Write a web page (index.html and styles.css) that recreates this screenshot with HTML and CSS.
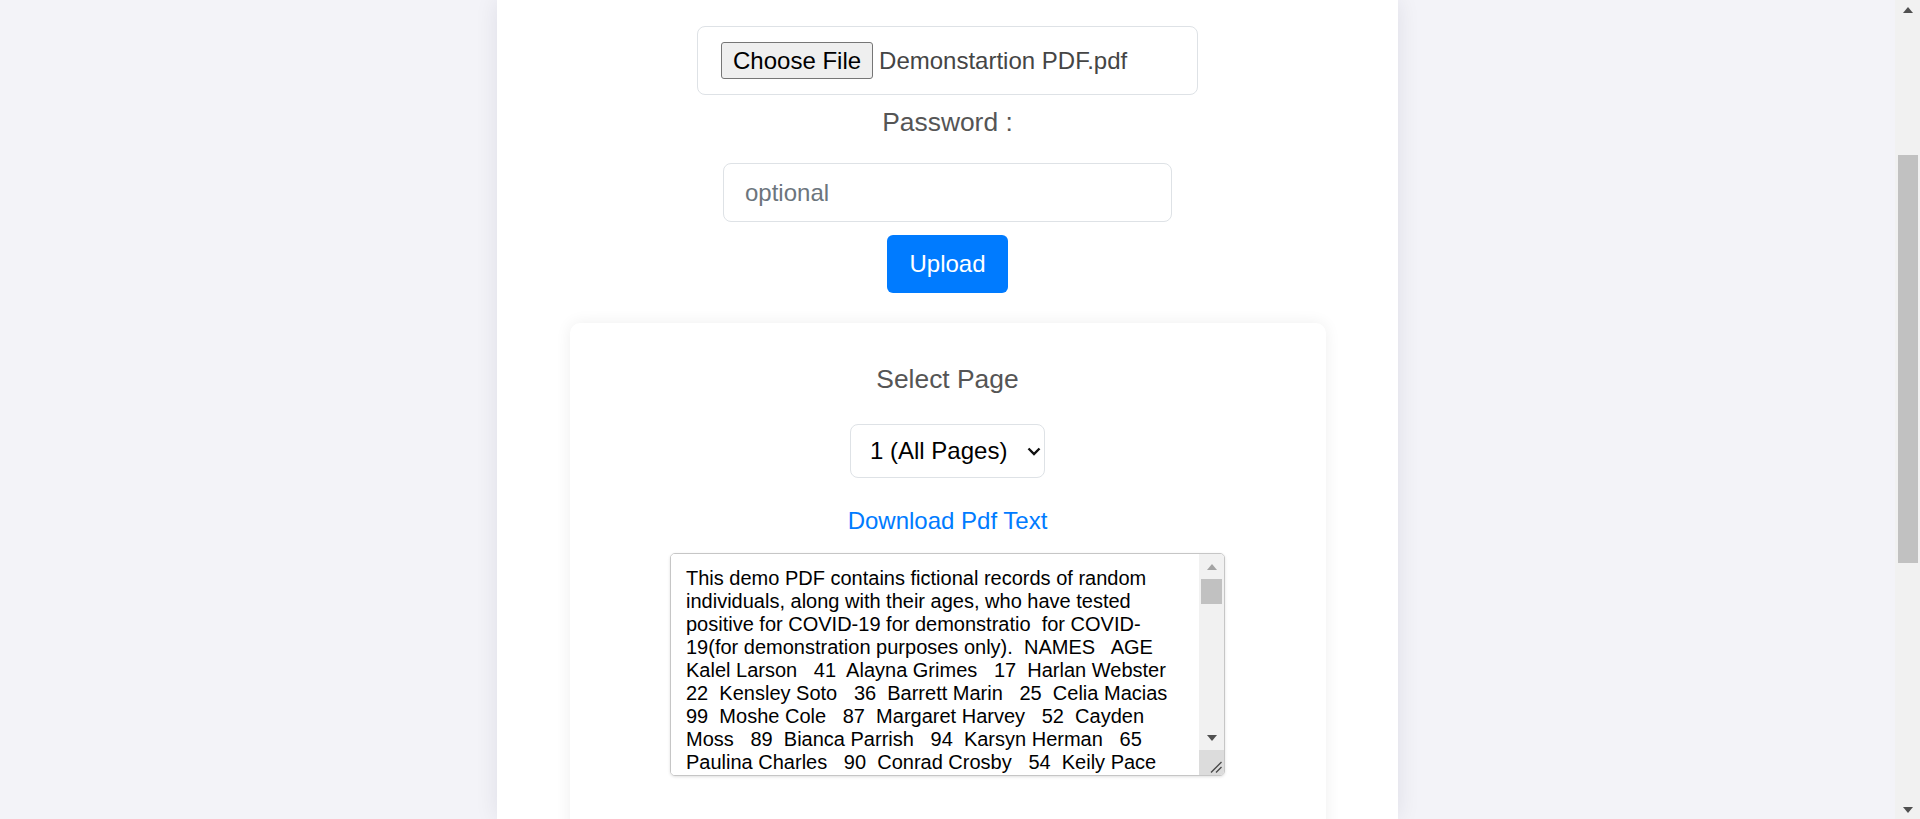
FILE: index.html
```html
<!DOCTYPE html>
<html lang="en">
<head>
<meta charset="utf-8">
<title>PDF to Text</title>
<link rel="stylesheet" href="styles.css">
</head>
<body>
<div class="page">
  <main class="container">
    <div class="file-box">
      <span class="file-btn">Choose File</span>
      <span class="file-name">Demonstartion PDF.pdf</span>
    </div>
    <label class="label password-label" for="pw">Password :</label>
    <input id="pw" class="pw-input" type="password" placeholder="optional">
    <button class="upload-btn" type="button">Upload</button>

    <section class="card">
      <div class="label">Select Page</div>
      <div class="select">
        <span class="select-text">1 (All Pages)</span>
        <svg class="chevron" width="14" height="9" viewBox="0 0 14 9"><path d="M1.5 1.5 L7 7 L12.5 1.5" fill="none" stroke="#111" stroke-width="2.4"/></svg>
      </div>
      <a class="download" href="#">Download Pdf Text</a>
      <div class="text-wrap">
        <textarea class="output" spellcheck="false">This demo PDF contains fictional records of random individuals, along with their ages, who have tested positive for COVID-19 for demonstratio  for COVID-19(for demonstration purposes only).  NAMES   AGE Kalel Larson   41  Alayna Grimes   17  Harlan Webster   22  Kensley Soto   36  Barrett Marin   25  Celia Macias   99  Moshe Cole   87  Margaret Harvey   52  Cayden Moss   89  Bianca Parrish   94  Karsyn Herman   65  Paulina Charles   90  Conrad Crosby   54  Keily Pace   33  Rory Bentley   48  Juliet Hahn   72  Dante Villarreal   29  Noelle Mack   61  Emmett Donovan   38  Amara Finley   83  Lennox Sutton   19  Jolene Russo   57  Kyler Branch   44  Madelyn Fox   70  Ronan Pugh   26  Elise Warner   91  Tobias Carr   35  Leilani Frost   63  Gideon Hurst   50  Vivian Pratt   28  Colton Riggs   76  Hazel Bowen   42  Silas Mercer   67  Daisy Rowe   23  Jasper Flynn   84  Mila Holt   31  Ezra Lowery   58  Nora Cantu   46  Felix Duran   95  Luna Rhodes   37  Jude Lambert   69  Iris Vance   21  Milo Garrison   53  Clara Wolfe   80  Asher Hensley   39  Stella Cobb   64  Reid Novak   27  Quinn Barrera   88  Hugo Moody   45  Ivy Kramer   73  Owen Blevins   32  Sadie Mullins   59  Axel Haney   24  Ruby Pittman   86  Wade Sellers   40</textarea>
        <div class="ta-scrollbar" aria-hidden="true">
          <div class="ta-btn"><span class="tri-up"></span></div>
          <div class="ta-track"><div class="ta-thumb"></div></div>
          <div class="ta-btn"><span class="tri-down"></span></div>
          <div class="ta-corner">
            <svg width="12" height="12" viewBox="0 0 12 12"><path d="M11.5 1 L1 11.5 M11.5 6 L6 11.5" stroke="#4a4a4a" stroke-width="1.4" fill="none"/></svg>
          </div>
        </div>
      </div>
    </section>
  </main>
  <div class="scrollbar" aria-hidden="true">
    <div class="sb-btn"><span class="arrow-up"></span></div>
    <div class="sb-track"><div class="sb-thumb"></div></div>
    <div class="sb-btn"><span class="arrow-down"></span></div>
  </div>
</div>
</body>
</html>
```
FILE: styles.css
```css
* { box-sizing: border-box; }

html, body {
  margin: 0;
  height: 100%;
}

body {
  overflow: hidden;
  background: #f3f3f8;
  font-family: "Liberation Sans", Arial, sans-serif;
  color: #212529;
}

.page {
  display: flex;
  height: 100vh;
}

.container {
  flex: 1 0 0;
  max-width: 901px;
  margin: 0 auto;
  background: #fff;
  box-shadow: 0 0 22px rgba(20, 20, 60, 0.09);
  padding-top: 26px;
  display: flex;
  flex-direction: column;
  align-items: center;
  overflow: hidden;
}

.file-box {
  width: 501px;
  height: 69px;
  flex-shrink: 0;
  border: 1px solid #dee2e6;
  border-radius: 8px;
  padding: 0 23px;
  display: flex;
  align-items: center;
  font-size: 24px;
}

.file-btn {
  display: inline-flex;
  align-items: center;
  height: 37px;
  padding: 0 11px;
  background: #efefef;
  border: 1px solid #767676;
  border-radius: 3px;
  color: #000;
}

.file-name {
  margin-left: 6px;
  color: #454545;
}

.label {
  font-size: 26.4px;
  color: #555;
  line-height: normal;
}

.password-label {
  margin-top: 12px;
}

.pw-input {
  margin-top: 25px;
  width: 449px;
  height: 59px;
  flex-shrink: 0;
  border: 1px solid #dee2e6;
  border-radius: 8px;
  padding: 0 21px;
  font-family: "Liberation Sans", Arial, sans-serif;
  font-size: 24px;
  color: #495057;
  outline: none;
}

.pw-input::placeholder {
  color: #6c757d;
}

.upload-btn {
  margin-top: 13px;
  width: 121px;
  height: 58px;
  flex-shrink: 0;
  border: none;
  border-radius: 6px;
  background: #007bff;
  color: #fff;
  font-family: "Liberation Sans", Arial, sans-serif;
  font-size: 24px;
  padding: 0;
}

.card {
  margin-top: 30px;
  width: 756px;
  height: 640px;
  flex-shrink: 0;
  background: #fff;
  border-radius: 10px;
  box-shadow: 0 0 16px rgba(0, 0, 0, 0.07);
  padding-top: 41px;
  display: flex;
  flex-direction: column;
  align-items: center;
}

.select {
  margin-top: 29px;
  width: 195px;
  height: 54px;
  border: 1px solid #dee2e6;
  border-radius: 8px;
  padding: 0 0 0 19px;
  display: flex;
  align-items: center;
  font-size: 24px;
  color: #000;
}

.chevron {
  margin-left: 20px;
  margin-top: 1px;
}

.download {
  margin-top: 29px;
  font-size: 24px;
  color: #007bff;
  text-decoration: none;
  line-height: normal;
}

.text-wrap {
  margin-top: 18px;
  width: 555px;
  height: 223px;
  flex-shrink: 0;
  display: flex;
  border: 1px solid #c6c6c6;
  border-radius: 5px;
  box-shadow: 0 1px 3px rgba(0, 0, 0, 0.12);
  overflow: hidden;
  background: #fff;
}

.output {
  flex: 1;
  min-width: 0;
  border: none;
  margin: 0;
  padding: 13px 15px;
  font-family: "Liberation Sans", Arial, sans-serif;
  font-size: 20px;
  line-height: 23px;
  color: #000;
  overflow: hidden;
  outline: none;
  resize: none;
  background: #fff;
}

.ta-scrollbar {
  width: 25px;
  flex-shrink: 0;
  display: flex;
  flex-direction: column;
  background: #f1f1f1;
}

.ta-btn {
  height: 25px;
  display: flex;
  align-items: center;
  justify-content: center;
}

.tri-up {
  width: 0;
  height: 0;
  border-left: 5px solid transparent;
  border-right: 5px solid transparent;
  border-bottom: 6px solid #a3a3a3;
}

.tri-down {
  width: 0;
  height: 0;
  border-left: 5px solid transparent;
  border-right: 5px solid transparent;
  border-top: 6px solid #505050;
}

.ta-track {
  flex: 1;
  padding: 0 2px;
}

.ta-thumb {
  height: 25px;
  background: #c1c1c1;
}

.ta-corner {
  height: 25px;
  background: #dcdcdc;
  display: flex;
  align-items: flex-end;
  justify-content: flex-end;
  padding: 0 2px 2px 0;
}

.scrollbar {
  width: 25px;
  flex-shrink: 0;
  background: #f1f1f1;
  display: flex;
  flex-direction: column;
}

.sb-btn {
  height: 19px;
  display: flex;
  align-items: center;
  justify-content: center;
}

.arrow-up {
  width: 0;
  height: 0;
  border-left: 5px solid transparent;
  border-right: 5px solid transparent;
  border-bottom: 6px solid #505050;
}

.arrow-down {
  width: 0;
  height: 0;
  border-left: 5px solid transparent;
  border-right: 5px solid transparent;
  border-top: 6px solid #505050;
}

.sb-track {
  flex: 1;
  padding: 136px 2px 0 3px;
}

.sb-thumb {
  height: 408px;
  background: #c1c1c1;
}
```
